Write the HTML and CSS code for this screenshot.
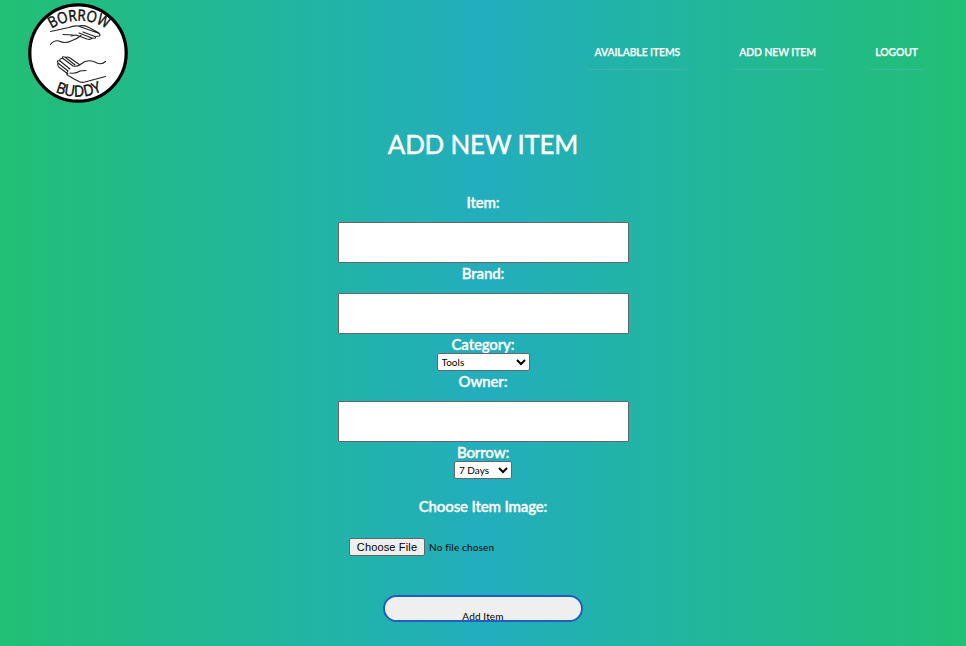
FILE: index.html
```
<!DOCTYPE html>
<html lang="en">
<head>
<meta charset="utf-8">
<title>Borrow Buddy</title>
<link rel="stylesheet" href="styles.css">
</head>
<body>
<header class="header">
  <svg class="logo" viewBox="0 0 100 100" role="img" aria-label="Borrow Buddy">
    <defs>
      <path id="arc-top" d="M18 30A50 50 0 0 1 84 30"/>
      <path id="arc-bottom" d="M20 85A57 57 0 0 0 80 85"/>
    </defs>
    <circle class="logo-disc" cx="50" cy="50" r="48.2"/>
    <text class="logo-text"><textPath href="#arc-top" startOffset="50%" text-anchor="middle" textLength="58" lengthAdjust="spacingAndGlyphs">BORROW</textPath></text>
    <text class="logo-text"><textPath href="#arc-bottom" startOffset="51%" text-anchor="middle" textLength="48" lengthAdjust="spacingAndGlyphs">BUDDY</textPath></text>
    <g class="logo-lines">
      <path d="M22.500 28.500L41 24.500Q45 22.500 50 23L70 30Q73 31.500 71.500 33L67 33.500L55 29M50 23Q56 22 60 24L71 30M67 33.500Q69 36 64 35L51 30M64 35Q63 37 59 36L48 32L43 33"/>
      <path d="M35 31.500L45 32M53 32.500Q49 36 43 38Q37 41 31 38Q26 37 22.500 41.500"/>
      <path d="M77.500 58.500Q74 62 69 60Q60 55 53 61Q50 64 45 63L35 55.500Q31 55 32 58L42 66M35 56Q33 53 37 54L47 62M32 58Q28 57 30 60L40 68M30 60Q29 63 32 65L40 71M42 55Q39 53 38 55M42 55L52 62M40 68Q37 72 41 73L46 76L50 78Q53 80 57 79L77.500 73.500M42 70Q48 71 52 68L58 67.500"/>
    </g>
  </svg>
  <nav class="nav">
    <a class="nav-link nav-items"><span>AVAILABLE ITEMS</span></a>
    <a class="nav-link nav-add"><span>ADD NEW ITEM</span></a>
    <a class="nav-link nav-logout"><span>LOGOUT</span></a>
  </nav>
</header>
<main>
  <h1 class="title">ADD NEW ITEM</h1>
  <form class="form">
    <label class="label" for="item">Item:</label>
    <input class="field" id="item" type="text">
    <label class="label" for="brand">Brand:</label>
    <input class="field" id="brand" type="text">
    <label class="label label-tight" for="category">Category:</label>
    <select class="select select-category" id="category"><option>Tools</option></select>
    <label class="label" for="owner">Owner:</label>
    <input class="field" id="owner" type="text">
    <label class="label label-tight" for="borrow">Borrow:</label>
    <select class="select select-borrow" id="borrow"><option>7 Days</option></select>
    <label class="label label-image" for="image">Choose Item Image:</label>
    <input class="file" id="image" type="file">
    <button class="submit" type="button">Add Item</button>
  </form>
</main>
</body>
</html>
```
FILE: styles.css
```
* { box-sizing: border-box; }

html { height: 100%; }

body {
  margin: 0;
  min-height: 100%;
  overflow: hidden;
  color: #fff;
  font-family: Lato, Carlito, sans-serif;
  background: linear-gradient(90deg, #22bf75 0%, #22aebd 50%, #22bf75 100%);
}

.header {
  display: flex;
  justify-content: space-between;
  height: 106px;
  padding: 3px 39px 0 28px;
}

.logo { width: 100px; height: 100px; overflow: visible; }
.logo-disc { fill: #fff; stroke: #000; stroke-width: 3.2; }
.logo-text { font: 500 15.5px "Open Sans", sans-serif; fill: #111; stroke: #111; stroke-width: .5; }
.logo-lines { fill: none; stroke: #222; stroke-width: 1.1; stroke-linecap: round; stroke-linejoin: round; }

.nav { display: flex; gap: 41px; padding-top: 30px; }
.nav-link {
  display: flex;
  align-items: center;
  justify-content: center;
  height: 37px;
  border-bottom: 1px solid rgba(70, 185, 180, .6);
  border-radius: 5px;
  font-size: 11px;
  font-weight: 600;
  letter-spacing: -.1px;
  white-space: nowrap;
  -webkit-text-stroke: .25px #fff;
}
.nav-link span { transform: scaleX(.945); }
.nav-items { width: 104px; }
.nav-add { width: 96px; }
.nav-logout { width: 60px; }

.title {
  margin: 0;
  height: 86px;
  padding-top: 20px;
  font-size: 27.5px;
  font-weight: 400;
  line-height: 36px;
  letter-spacing: -.2px;
  text-align: center;
  transform: scaleX(.94);
  -webkit-text-stroke: .5px #fff;
}

.form { display: flex; flex-direction: column; align-items: center; }

.label {
  height: 20px;
  font-size: 15px;
  font-weight: 600;
  line-height: 20px;
  letter-spacing: -.15px;
  -webkit-text-stroke: .3px #fff;
}
.label-tight { height: 19px; }
.label-image { margin-top: 17px; }

.field {
  width: 291px;
  height: 41px;
  margin: 10px 0 0;
  border: 1px solid #666;
  border-radius: 1px;
  background: #fff;
}

.select {
  height: 18px;
  padding: 0;
  border: 1px solid #666;
  border-radius: 2px;
  color: #000;
  background-color: #fff;
  font: 10px Lato, sans-serif;
}
.select-category { width: 93px; }
.select-borrow { width: 58px; }

.file {
  width: 268px;
  height: 18px;
  margin-top: 22px;
  color: #000;
  font: 10px/18px Lato, sans-serif;
  letter-spacing: .15px;
}
.file::file-selector-button {
  width: 76px;
  height: 18px;
  margin: 0 4px 0 0;
  padding: 0;
  border: 1px solid #666;
  border-radius: 2px;
  color: #000;
  background: #efefef;
  font: 11px "Liberation Sans", sans-serif;
  letter-spacing: .15px;
}

.submit {
  width: 200px;
  height: 27px;
  margin-top: 39px;
  padding: 13px 0 0;
  overflow: hidden;
  border: 2px solid #1f5fbf;
  border-radius: 14px;
  color: #000;
  background: #efefef;
  font: 10px/12px Lato, sans-serif;
  letter-spacing: .15px;
}
```
